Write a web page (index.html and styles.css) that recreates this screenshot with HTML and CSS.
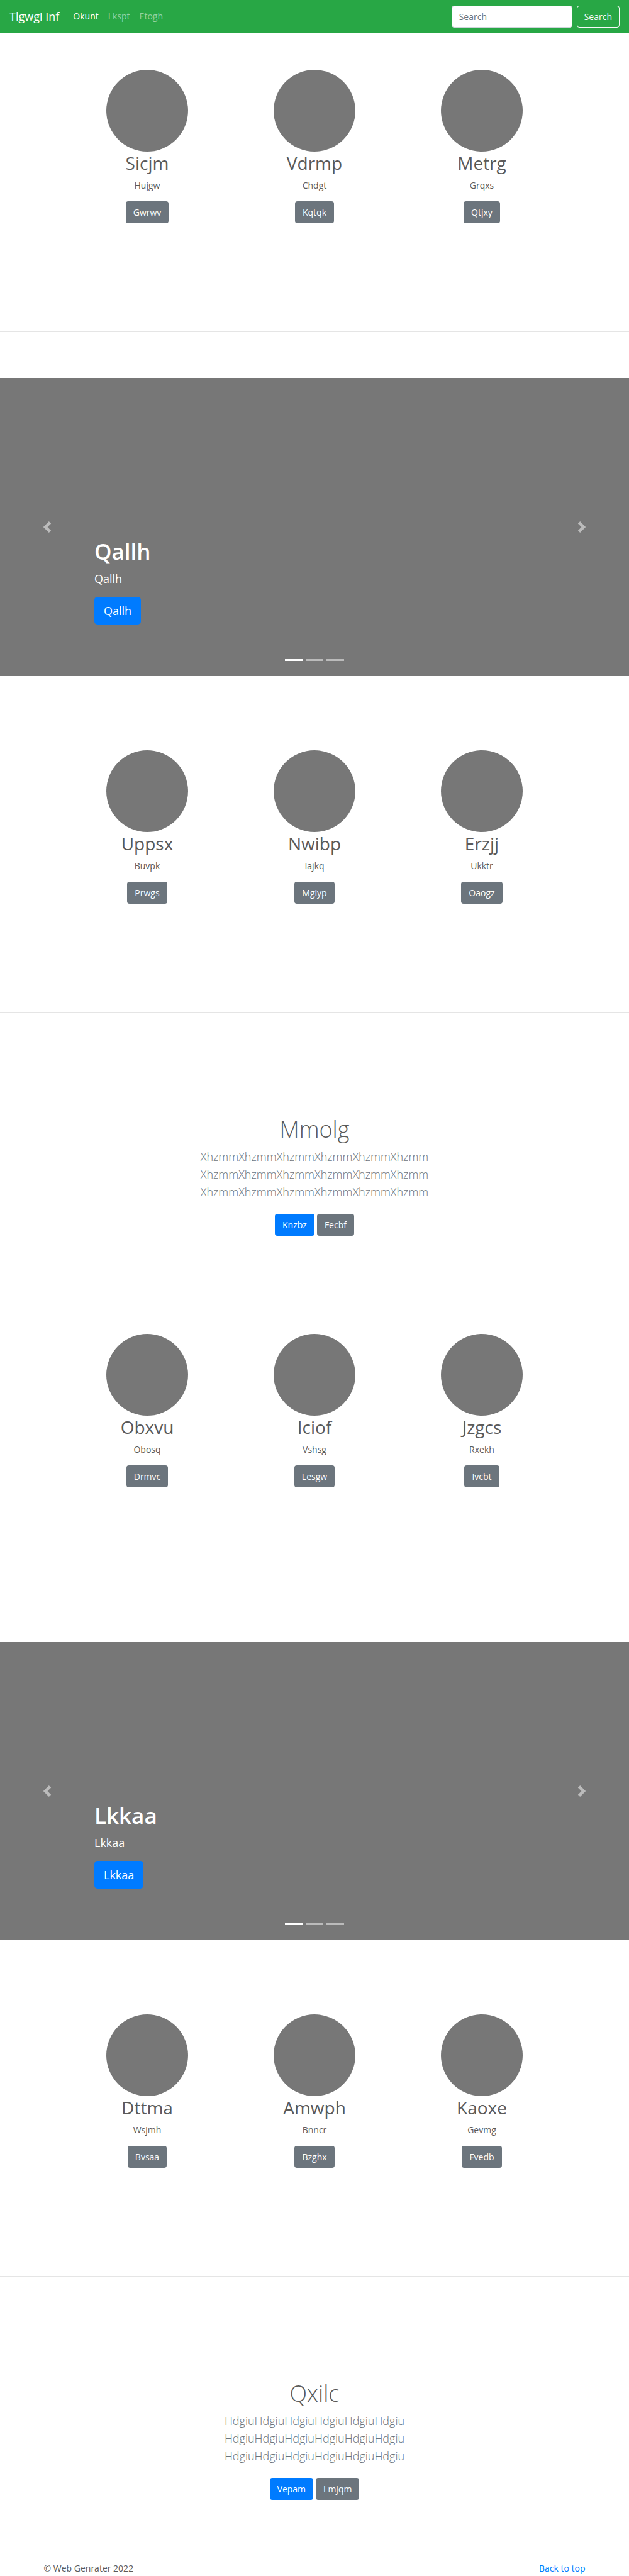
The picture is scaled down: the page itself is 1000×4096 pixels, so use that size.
FILE: index.html
```html
<!DOCTYPE html>
<html lang="en">
<head>
<meta charset="utf-8">
<meta name="viewport" content="width=device-width, initial-scale=1">
<title>Tlgwgi Inf</title>
<link rel="stylesheet" href="styles.css">
</head>
<body id="top">
<header class="navbar">
  <a class="brand" href="#">Tlgwgi Inf</a>
  <nav class="nav-links">
    <a class="nav-link active" href="#">Okunt</a>
    <a class="nav-link" href="#">Lkspt</a>
    <a class="nav-link" href="#">Etogh</a>
  </nav>
  <form class="search">
    <input class="search-input" type="search" placeholder="Search" aria-label="Search">
    <button class="btn btn-outline" type="submit">Search</button>
  </form>
</header>
<main>
  <section class="features features-first">
    <article class="feature"><div class="avatar"></div><h2>Sicjm</h2><p>Hujgw</p><a class="btn btn-secondary" href="#">Gwrwv</a></article>
    <article class="feature"><div class="avatar"></div><h2>Vdrmp</h2><p>Chdgt</p><a class="btn btn-secondary" href="#">Kqtqk</a></article>
    <article class="feature"><div class="avatar"></div><h2>Metrg</h2><p>Grqxs</p><a class="btn btn-secondary" href="#">Qtjxy</a></article>
  </section>
  <hr class="divider">
  <section class="carousel">
    <button class="control" type="button" aria-label="Previous"><svg class="arrow" viewBox="0 0 8 8"><path d="M5.25 0l-4 4 4 4 1.5-1.5L4.25 4l2.5-2.5L5.25 0z"/></svg></button>
    <div class="slide">
      <div class="caption"><h1>Qallh</h1><p>Qallh</p><a class="btn btn-primary btn-large" href="#">Qallh</a></div>
      <div class="indicators"><span class="indicator current"></span><span class="indicator"></span><span class="indicator"></span></div>
    </div>
    <button class="control" type="button" aria-label="Next"><svg class="arrow" viewBox="0 0 8 8"><path d="M2.75 0l-1.5 1.5L3.75 4l-2.5 2.5L2.75 8l4-4-4-4z"/></svg></button>
  </section>
  <section class="features">
    <article class="feature"><div class="avatar"></div><h2>Uppsx</h2><p>Buvpk</p><a class="btn btn-secondary" href="#">Prwgs</a></article>
    <article class="feature"><div class="avatar"></div><h2>Nwibp</h2><p>Iajkq</p><a class="btn btn-secondary" href="#">Mgiyp</a></article>
    <article class="feature"><div class="avatar"></div><h2>Erzjj</h2><p>Ukktr</p><a class="btn btn-secondary" href="#">Oaogz</a></article>
  </section>
  <hr class="divider">
  <section class="intro">
    <h1>Mmolg</h1>
    <p>XhzmmXhzmmXhzmmXhzmmXhzmmXhzmm<br>XhzmmXhzmmXhzmmXhzmmXhzmmXhzmm<br>XhzmmXhzmmXhzmmXhzmmXhzmmXhzmm</p>
    <div class="actions"><a class="btn btn-primary" href="#">Knzbz</a><a class="btn btn-secondary" href="#">Fecbf</a></div>
  </section>
  <section class="features features-joined">
    <article class="feature"><div class="avatar"></div><h2>Obxvu</h2><p>Obosq</p><a class="btn btn-secondary" href="#">Drmvc</a></article>
    <article class="feature"><div class="avatar"></div><h2>Iciof</h2><p>Vshsg</p><a class="btn btn-secondary" href="#">Lesgw</a></article>
    <article class="feature"><div class="avatar"></div><h2>Jzgcs</h2><p>Rxekh</p><a class="btn btn-secondary" href="#">Ivcbt</a></article>
  </section>
  <hr class="divider">
  <section class="carousel">
    <button class="control" type="button" aria-label="Previous"><svg class="arrow" viewBox="0 0 8 8"><path d="M5.25 0l-4 4 4 4 1.5-1.5L4.25 4l2.5-2.5L5.25 0z"/></svg></button>
    <div class="slide">
      <div class="caption"><h1>Lkkaa</h1><p>Lkkaa</p><a class="btn btn-primary btn-large" href="#">Lkkaa</a></div>
      <div class="indicators"><span class="indicator current"></span><span class="indicator"></span><span class="indicator"></span></div>
    </div>
    <button class="control" type="button" aria-label="Next"><svg class="arrow" viewBox="0 0 8 8"><path d="M2.75 0l-1.5 1.5L3.75 4l-2.5 2.5L2.75 8l4-4-4-4z"/></svg></button>
  </section>
  <section class="features">
    <article class="feature"><div class="avatar"></div><h2>Dttma</h2><p>Wsjmh</p><a class="btn btn-secondary" href="#">Bvsaa</a></article>
    <article class="feature"><div class="avatar"></div><h2>Amwph</h2><p>Bnncr</p><a class="btn btn-secondary" href="#">Bzghx</a></article>
    <article class="feature"><div class="avatar"></div><h2>Kaoxe</h2><p>Gevmg</p><a class="btn btn-secondary" href="#">Fvedb</a></article>
  </section>
  <hr class="divider">
  <section class="intro intro-last">
    <h1>Qxilc</h1>
    <p>HdgiuHdgiuHdgiuHdgiuHdgiuHdgiu<br>HdgiuHdgiuHdgiuHdgiuHdgiuHdgiu<br>HdgiuHdgiuHdgiuHdgiuHdgiuHdgiu</p>
    <div class="actions"><a class="btn btn-primary" href="#">Vepam</a><a class="btn btn-secondary" href="#">Lmjqm</a></div>
  </section>
</main>
<footer class="footer">
  <span>© Web Genrater 2022</span>
  <a href="#top">Back to top</a>
</footer>
</body>
</html>
```
FILE: styles.css
```css
*, *::before, *::after { box-sizing: border-box; }

body {
  margin: 0;
  background: #fff;
  color: #5a5a5a;
  font: 400 14px/22px "Open Sans", "Noto Sans", sans-serif;
}

h1, h2, p { margin: 0; }
a { color: #007bff; text-decoration: none; }

/* Buttons */
.btn {
  display: inline-block;
  padding: 6px 11px;
  border: 1px solid transparent;
  border-radius: 4px;
  font: inherit;
  line-height: 21px;
  color: #fff;
  text-align: center;
}
.btn-primary { background: #007bff; }
.btn-secondary { background: #6c757d; }
.btn-outline { background: transparent; border-color: #f8f9fa; color: #f8f9fa; }
.btn-large { padding: 7px 14px; border-radius: 5px; font-size: 18px; line-height: 28px; }

/* Top bar */
.navbar {
  display: flex;
  align-items: center;
  min-height: 52px;
  padding: 0 15px;
  background: #28a745;
}
.brand { margin-right: 22px; color: #fff; font-size: 18px; line-height: 28px; }
.nav-links { display: flex; gap: 15px; }
.nav-link { color: rgba(255, 255, 255, .5); }
.nav-link.active { color: #fff; }
.search { display: flex; gap: 7px; margin-left: auto; }
.search-input {
  width: 192px;
  height: 35px;
  padding: 6px 11px;
  border: 1px solid #ced4da;
  border-radius: 4px;
  background: #fff;
  color: #495057;
  font: inherit;
  appearance: none;
}
.search-input::placeholder { color: #6c757d; opacity: 1; }

/* Three-column features */
.features {
  display: grid;
  grid-template-columns: repeat(3, 1fr);
  max-width: 798px;
  margin: 0 auto;
  padding: 118px 0 172px;
}
.features-first { padding-top: 59px; }
.features-joined { padding-top: 0; }
.feature { text-align: center; }
.avatar { width: 130px; height: 130px; margin: 0 auto; border-radius: 50%; background: #777; }
.feature h2 { margin-bottom: 7px; font-size: 28px; line-height: 36px; font-weight: 400; }
.feature p { margin-bottom: 14px; }
.feature .btn { vertical-align: top; }
.divider { height: 1px; margin: 0; border: 0; background: #e5e5e5; }

/* Carousel */
.carousel {
  display: grid;
  grid-template-columns: 15% 1fr 15%;
  min-height: 474px;
  margin-top: 73px;
  background: #777;
  color: #fff;
}
.control {
  display: flex;
  align-items: center;
  justify-content: center;
  padding: 0;
  border: 0;
  background: none;
  opacity: .5;
}
.arrow { width: 18px; height: 18px; fill: #fff; }
.slide { display: flex; flex-direction: column; justify-content: flex-end; padding-bottom: 24px; }
.caption { margin-bottom: 55px; }
.caption h1 { margin-bottom: 7px; font-size: 35px; line-height: 44px; font-weight: 600; }
.caption p { margin-bottom: 15px; font-size: 18px; line-height: 28px; }
.caption .btn { vertical-align: top; }
.indicators { display: flex; justify-content: center; gap: 5px; }
.indicator { width: 28px; height: 3px; background: #fff; opacity: .5; }
.indicator.current { opacity: 1; }

/* Centered introduction */
.intro { padding: 164px 15px 156px; text-align: center; }
.intro-last { padding-bottom: 98px; }
.intro h1 { margin-bottom: 7px; font-size: 36px; line-height: 44px; font-weight: 300; }
.intro p { margin-bottom: 21px; color: #6c757d; font-size: 18px; line-height: 28px; font-weight: 300; }
.actions { display: flex; justify-content: center; gap: 4px; }

.footer {
  display: flex;
  justify-content: space-between;
  max-width: 861px;
  margin: 0 auto;
}
```
